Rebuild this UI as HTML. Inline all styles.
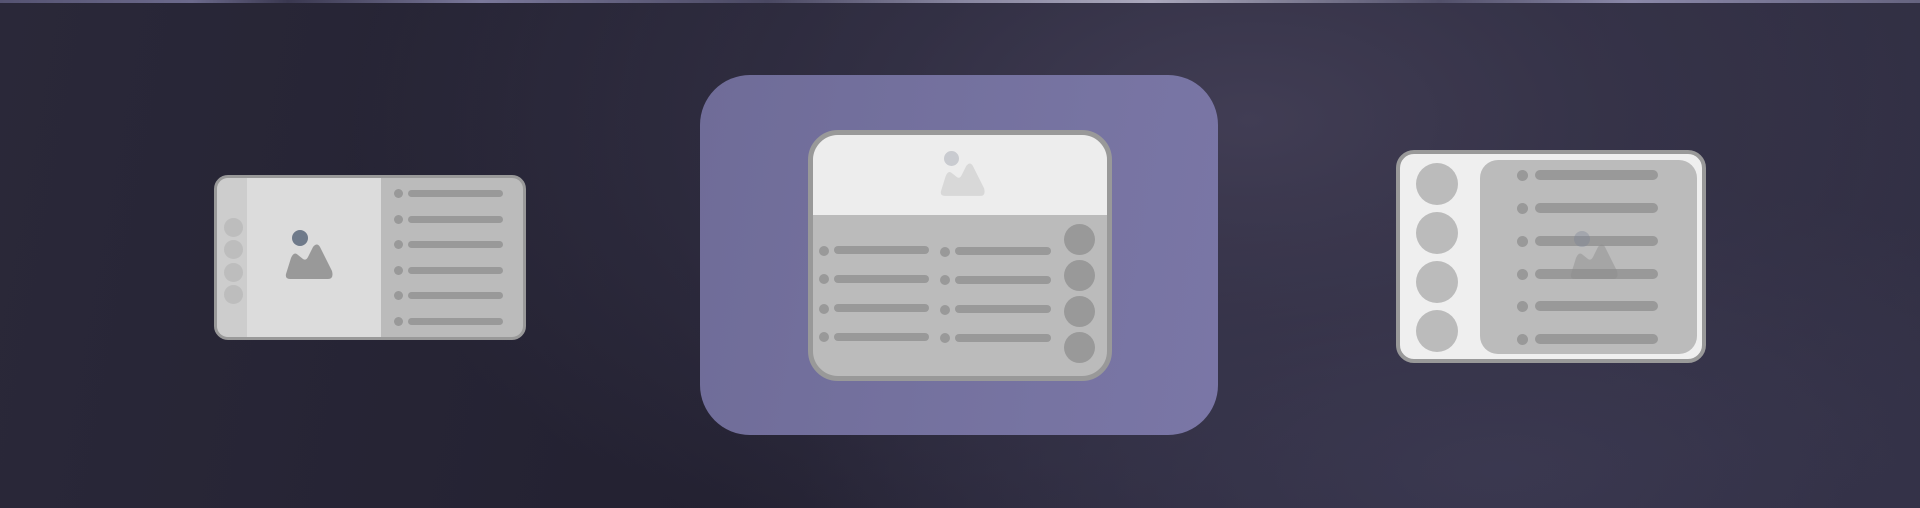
<!DOCTYPE html>
<html><head><meta charset="utf-8"><style>
*{margin:0;padding:0;box-sizing:border-box}
body{width:1920px;height:508px;overflow:hidden;position:relative;
background:radial-gradient(ellipse 900px 500px at 1250px 120px,#413d54 0%,rgba(60,57,80,0.6) 40%,rgba(0,0,0,0) 100%),radial-gradient(ellipse 700px 300px at 1500px 470px,#3a3850 0%,rgba(0,0,0,0) 100%),linear-gradient(100deg,#2a2839 0%,#232131 40%,#302e42 100%);}
.a{position:absolute}
.top{left:0;top:0;width:1920px;height:3px;background:linear-gradient(90deg,#555372,#6c6a8c 10%,#3a3850 15%,#7a789a 25%,#4a4862 40%,#8886a0 50%,#aaa8bc 60%,#52506a 75%,#8a88a8 85%,#666480)}
.dot{position:absolute;border-radius:50%}
.bar{position:absolute;border-radius:5px;background:#999}
</style></head><body>
<div class="a top"></div>

<!-- card 1 -->
<div class="a" style="left:214px;top:175px;width:312px;height:165px;border:3px solid #999;border-radius:14px;overflow:hidden;background:#bbb">
  <div class="a" style="left:0;top:0;width:30px;height:100%;background:#cdcdcd"></div>
  <div class="a" style="left:30px;top:0;width:134px;height:100%;background:#dcdcdc"></div>
  <div class="dot" style="left:7px;top:40px;width:19px;height:19px;background:#bdbdbd"></div>
  <div class="dot" style="left:7px;top:62px;width:19px;height:19px;background:#bdbdbd"></div>
  <div class="dot" style="left:7px;top:85px;width:19px;height:19px;background:#bdbdbd"></div>
  <div class="dot" style="left:7px;top:107px;width:19px;height:19px;background:#bdbdbd"></div>
  <div class="dot" style="left:75px;top:52px;width:16px;height:16px;background:#6f7a8a"></div>
  <svg class="a" style="left:68px;top:66px" width="49" height="35" viewBox="0 0 49 35"><path d="M5 35 Q0 35 1 30 L6 14 Q9 7 13 11 L18 15 Q21 17 23 13 L28 3 Q32 -2 35 3 L47 27 Q49 35 43 35 Z" fill="#999"/></svg>
</div>
<div class="a" style="left:0;top:0">
  <div class="dot" style="left:394px;top:189px;width:9px;height:9px;background:#999"></div><div class="bar" style="left:408px;top:190px;width:95px;height:7px"></div>
  <div class="dot" style="left:394px;top:215px;width:9px;height:9px;background:#999"></div><div class="bar" style="left:408px;top:216px;width:95px;height:7px"></div>
  <div class="dot" style="left:394px;top:240px;width:9px;height:9px;background:#999"></div><div class="bar" style="left:408px;top:241px;width:95px;height:7px"></div>
  <div class="dot" style="left:394px;top:266px;width:9px;height:9px;background:#999"></div><div class="bar" style="left:408px;top:267px;width:95px;height:7px"></div>
  <div class="dot" style="left:394px;top:291px;width:9px;height:9px;background:#999"></div><div class="bar" style="left:408px;top:292px;width:95px;height:7px"></div>
  <div class="dot" style="left:394px;top:317px;width:9px;height:9px;background:#999"></div><div class="bar" style="left:408px;top:318px;width:95px;height:7px"></div>
</div>

<!-- card 2 -->
<div class="a" style="left:700px;top:75px;width:518px;height:360px;border-radius:50px;background:linear-gradient(100deg,#6f6c98,#7774a2 70%,#7a76a6)"></div>
<div class="a" style="left:808px;top:130px;width:304px;height:251px;border:5px solid #999;border-radius:30px;overflow:hidden;background:#bbb">
  <div class="a" style="left:0;top:0;width:100%;height:80px;background:#ededed"></div>
  <div class="dot" style="left:131px;top:16px;width:15px;height:15px;background:#c9cbd0"></div>
  <svg class="a" style="left:127px;top:28px" width="46" height="33" viewBox="0 0 49 35"><path d="M5 35 Q0 35 1 30 L6 14 Q9 7 13 11 L18 15 Q21 17 23 13 L28 3 Q32 -2 35 3 L47 27 Q49 35 43 35 Z" fill="#d8d8d8"/></svg>
</div>
<div class="a" style="left:0;top:0">
  <div class="dot" style="left:819px;top:246px;width:10px;height:10px;background:#999"></div><div class="bar" style="left:834px;top:246px;width:95px;height:8px"></div>
  <div class="dot" style="left:819px;top:274px;width:10px;height:10px;background:#999"></div><div class="bar" style="left:834px;top:275px;width:95px;height:8px"></div>
  <div class="dot" style="left:819px;top:304px;width:10px;height:10px;background:#999"></div><div class="bar" style="left:834px;top:304px;width:95px;height:8px"></div>
  <div class="dot" style="left:819px;top:332px;width:10px;height:10px;background:#999"></div><div class="bar" style="left:834px;top:333px;width:95px;height:8px"></div>
  <div class="dot" style="left:940px;top:247px;width:10px;height:10px;background:#999"></div><div class="bar" style="left:955px;top:247px;width:96px;height:8px"></div>
  <div class="dot" style="left:940px;top:275px;width:10px;height:10px;background:#999"></div><div class="bar" style="left:955px;top:276px;width:96px;height:8px"></div>
  <div class="dot" style="left:940px;top:305px;width:10px;height:10px;background:#999"></div><div class="bar" style="left:955px;top:305px;width:96px;height:8px"></div>
  <div class="dot" style="left:940px;top:333px;width:10px;height:10px;background:#999"></div><div class="bar" style="left:955px;top:334px;width:96px;height:8px"></div>
  <div class="dot" style="left:1064px;top:224px;width:31px;height:31px;background:#999"></div>
  <div class="dot" style="left:1064px;top:260px;width:31px;height:31px;background:#999"></div>
  <div class="dot" style="left:1064px;top:296px;width:31px;height:31px;background:#999"></div>
  <div class="dot" style="left:1064px;top:332px;width:31px;height:31px;background:#999"></div>
</div>

<!-- card 3 -->
<div class="a" style="left:1396px;top:150px;width:310px;height:213px;border:4px solid #999;border-radius:18px;background:#efefef"></div>
<div class="a" style="left:0;top:0">
  <div class="dot" style="left:1416px;top:163px;width:42px;height:42px;background:#bbb"></div>
  <div class="dot" style="left:1416px;top:212px;width:42px;height:42px;background:#bbb"></div>
  <div class="dot" style="left:1416px;top:261px;width:42px;height:42px;background:#bbb"></div>
  <div class="dot" style="left:1416px;top:310px;width:42px;height:42px;background:#bbb"></div>
  <div class="a" style="left:1480px;top:160px;width:217px;height:194px;border-radius:18px;background:#bbb"></div>
  <div class="dot" style="left:1517px;top:170px;width:11px;height:11px;background:#999"></div><div class="bar" style="left:1535px;top:170px;width:123px;height:10px"></div>
  <div class="dot" style="left:1517px;top:203px;width:11px;height:11px;background:#999"></div><div class="bar" style="left:1535px;top:203px;width:123px;height:10px"></div>
  <div class="dot" style="left:1517px;top:236px;width:11px;height:11px;background:#999"></div><div class="bar" style="left:1535px;top:236px;width:123px;height:10px"></div>
  <div class="dot" style="left:1517px;top:269px;width:11px;height:11px;background:#999"></div><div class="bar" style="left:1535px;top:269px;width:123px;height:10px"></div>
  <div class="dot" style="left:1517px;top:301px;width:11px;height:11px;background:#999"></div><div class="bar" style="left:1535px;top:301px;width:123px;height:10px"></div>
  <div class="dot" style="left:1517px;top:334px;width:11px;height:11px;background:#999"></div><div class="bar" style="left:1535px;top:334px;width:123px;height:10px"></div>
  <div class="dot" style="left:1574px;top:231px;width:16px;height:16px;background:rgba(120,130,150,0.35)"></div>
  <svg class="a" style="left:1570px;top:244px" width="49" height="35" viewBox="0 0 49 35"><path d="M5 35 Q0 35 1 30 L6 14 Q9 7 13 11 L18 15 Q21 17 23 13 L28 3 Q32 -2 35 3 L47 27 Q49 35 43 35 Z" fill="rgba(140,140,140,0.45)"/></svg>
</div>
</body></html>
